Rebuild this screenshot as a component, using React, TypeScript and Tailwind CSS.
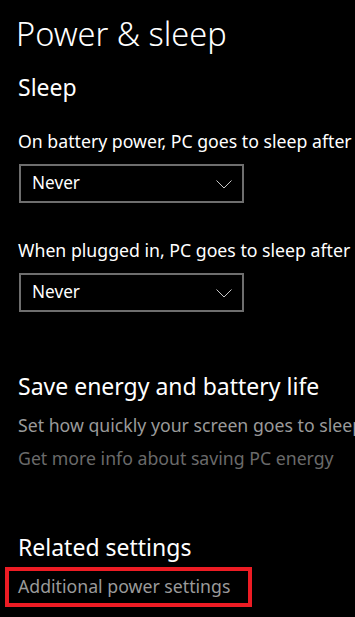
const Dropdown = ({ value }: { value: string }) => {
  return (
    <div className="ml-[1px] flex h-[39px] w-[225px] items-center justify-between border-2 border-[#6e6e6e] pl-[11px] pr-[10px]">
      <span className="pb-[2px] text-[17.2px] leading-[24px] text-white">{value}</span>
      <svg width="16" height="9" viewBox="0 0 16 9" fill="none" className="mt-[1px]">
        <polyline points="0.5,0.5 8,8 15.5,0.5" stroke="#c8c8c8" strokeWidth="1" />
      </svg>
    </div>
  );
};

const App = () => {
  return (
    <div className="min-h-screen w-full overflow-hidden bg-black pl-[18px] pt-[14px] font-['Noto_Sans',sans-serif] whitespace-nowrap">
      <h1 className="-ml-[2px] text-[32.5px] font-light leading-[40px] text-white">Power &amp; sleep</h1>

      <h2 className="mt-[18px] text-[23px] leading-[30px] text-white">Sleep</h2>

      <p className="mt-[27px] text-[17.7px] leading-[24px] text-white">
        On battery power, PC goes to sleep after
      </p>
      <div className="mt-[11px]">
        <Dropdown value="Never" />
      </div>

      <p className="mt-[35px] text-[17.7px] leading-[24px] text-white">
        When plugged in, PC goes to sleep after
      </p>
      <div className="mt-[11px]">
        <Dropdown value="Never" />
      </div>

      <h2 className="mt-[59px] text-[23px] leading-[30px] text-white">Save energy and battery life</h2>
      <p className="mt-[12px] text-[17.7px] leading-[24px] text-[#9a9a9a]">
        Set how quickly your screen goes to sleep
      </p>
      <p className="mt-[9px] text-[17.7px] leading-[24px] text-[#6a6a6a]">
        Get more info about saving PC energy
      </p>

      <h2 className="mt-[62px] text-[23px] leading-[30px] text-white">Related settings</h2>
      <div className="-ml-[13px] mt-[5px] h-[40px] w-[247px] border-4 border-[#ed1c24] pl-[9px] pt-[3px]">
        <span className="text-[17.7px] leading-[24px] text-[#9a9a9a]">Additional power settings</span>
      </div>
    </div>
  );
};

export default App;
